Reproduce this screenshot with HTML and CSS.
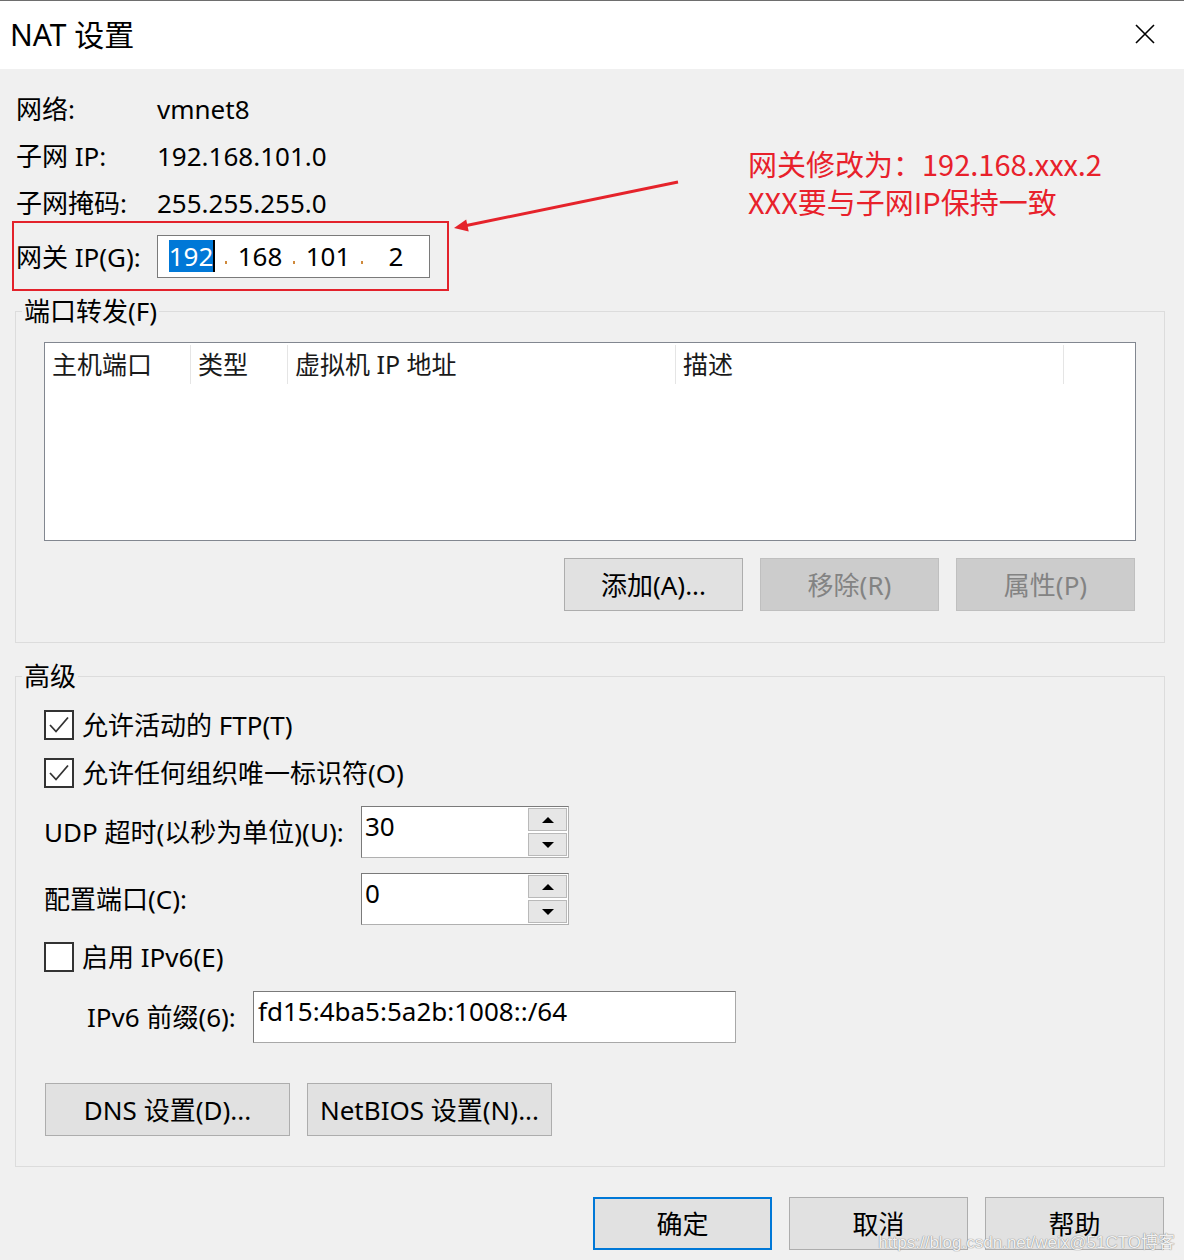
FILE: index.html
```html
<!DOCTYPE html>
<html lang="zh-CN">
<head>
<meta charset="utf-8">
<title>NAT 设置</title>
<link rel="stylesheet" href="styles.css">
</head>
<body>
<div class="dialog">
  <header class="titlebar">
    <span class="title">NAT 设置</span>
    <svg class="close" width="20" height="20" viewBox="0 0 20 20"><path d="M1 1 L19 19 M19 1 L1 19" stroke="#000" stroke-width="1.6" fill="none"/></svg>
  </header>

  <div class="content">
    <div class="info">
      <div class="row"><span class="lbl">网络:</span><span>vmnet8</span></div>
      <div class="row"><span class="lbl">子网 IP:</span><span>192.168.101.0</span></div>
      <div class="row"><span class="lbl">子网掩码:</span><span>255.255.255.0</span></div>
    </div>

    <div class="gateway">
      <span class="lbl">网关 IP(G):</span>
      <div class="ipfield">
        <span class="seg"><span class="sel">192</span><span class="caret"></span></span>
        <span class="dot"></span>
        <span class="seg">168</span>
        <span class="dot"></span>
        <span class="seg">101</span>
        <span class="dot"></span>
        <span class="seg">2</span>
      </div>
    </div>

    <fieldset class="group group-ports">
      <legend>端口转发(F)</legend>
      <div class="group-inner">
        <div class="list">
          <div class="list-head">
            <div class="col">主机端口</div>
            <div class="col">类型</div>
            <div class="col">虚拟机 IP 地址</div>
            <div class="col">描述</div>
            <div class="col last"></div>
          </div>
        </div>
        <div class="btnrow">
          <button class="btn">添加(A)...</button>
          <button class="btn disabled">移除(R)</button>
          <button class="btn disabled">属性(P)</button>
        </div>
      </div>
    </fieldset>

    <fieldset class="group group-adv">
      <legend>高级</legend>
      <div class="adv-inner">
        <div class="chk-row first">
          <span class="checkbox"><svg width="26" height="26" viewBox="0 0 26 26"><path d="M4 13 L10 19.5 L22 5.5" stroke="#333" stroke-width="1.8" fill="none"/></svg></span>
          <span>允许活动的 FTP(T)</span>
        </div>
        <div class="chk-row second">
          <span class="checkbox"><svg width="26" height="26" viewBox="0 0 26 26"><path d="M4 13 L10 19.5 L22 5.5" stroke="#333" stroke-width="1.8" fill="none"/></svg></span>
          <span>允许任何组织唯一标识符(O)</span>
        </div>
        <div class="field-row udp">
          <span class="flbl">UDP 超时(以秒为单位)(U):</span>
          <div class="spin">
            <span class="spin-val">30</span>
            <span class="spin-btns">
              <span class="sbtn"><span class="tri up"></span></span>
              <span class="sbtn"><span class="tri down"></span></span>
            </span>
          </div>
        </div>
        <div class="field-row port">
          <span class="flbl">配置端口(C):</span>
          <div class="spin">
            <span class="spin-val">0</span>
            <span class="spin-btns">
              <span class="sbtn"><span class="tri up"></span></span>
              <span class="sbtn"><span class="tri down"></span></span>
            </span>
          </div>
        </div>
        <div class="chk-row ipv6">
          <span class="checkbox"></span>
          <span>启用 IPv6(E)</span>
        </div>
        <div class="prefix-row">
          <span class="plbl">IPv6 前缀(6):</span>
          <div class="textbox">fd15:4ba5:5a2b:1008::/64</div>
        </div>
        <div class="adv-btns">
          <button class="btn wide">DNS 设置(D)...</button>
          <button class="btn wide">NetBIOS 设置(N)...</button>
        </div>
      </div>
    </fieldset>

    <div class="footer">
      <button class="btn default">确定</button>
      <button class="btn">取消</button>
      <button class="btn">帮助</button>
    </div>
  </div>

  <div class="note">网关修改为：192.168.xxx.2<br>XXX要与子网IP保持一致</div>
  <svg class="arrow" width="250" height="70" viewBox="0 0 250 70">
    <line x1="238" y1="12" x2="24" y2="56" stroke="#e5232b" stroke-width="3"/>
    <polygon points="14,58 28.7,61.5 26.2,49.5" fill="#e5232b"/>
  </svg>
  <div class="watermark">https://blog.csdn.net/weix@51CTO博客</div>
</div>
</body>
</html>
```

FILE: styles.css
```css
* { box-sizing: border-box; }
html, body { margin: 0; padding: 0; }
body {
  width: 1184px;
  height: 1260px;
  overflow: hidden;
  background: #f0f0f0;
  font-family: "Noto Sans", "Noto Sans CJK SC", sans-serif;
  font-size: 26px;
  color: #000;
}
.dialog {
  position: relative;
  width: 1184px;
  height: 1260px;
  background: #f0f0f0;
  border-top: 1px solid #6e6e6e;
}
.titlebar {
  height: 68px;
  background: #fff;
  display: flex;
  align-items: center;
  justify-content: space-between;
  padding: 0 29px 0 10px;
}
.title { font-size: 30px; line-height: 36px; }
.close { margin-bottom: 3px; }

.content { padding: 16px 19px 0 15px; }

.info .row {
  display: flex;
  align-items: center;
  height: 47px;
  line-height: 30px;
  padding-left: 1px;
}
.lbl { width: 141px; flex: none; }

.gateway {
  margin: -5px 0 0 -3px;
  width: 437px;
  height: 70px;
  border: 2px solid #e3222b;
  display: flex;
  align-items: center;
  padding-left: 2px;
}
.ipfield {
  width: 273px;
  height: 43px;
  border: 1px solid #7a7a7a;
  background: #fff;
  display: flex;
  align-items: center;
  padding-left: 4px;
}
.seg {
  width: 60px;
  display: flex;
  justify-content: center;
  align-items: center;
  line-height: 32px;
}
.sel { background: #0078d7; color: #fff; height: 32px; }
.caret { width: 2px; height: 32px; background: #000; }
.dot {
  width: 8px;
  height: 30px;
  display: flex;
  justify-content: center;
  align-items: flex-end;
}
.dot::after {
  content: "";
  width: 2px;
  height: 3px;
  margin-bottom: 7px;
  background: #cf8a3c;
}

.group {
  margin: 5px 0 0 0;
  padding: 0;
  border: 1px solid #dcdcdc;
  min-width: 0;
}
.group legend {
  margin-left: 6px;
  padding: 0 2px;
  font-size: 26px;
  line-height: 30px;
}
.group-adv { margin-top: 18px; }

.group-inner { padding: 16px 28px 31px 28px; }
.list {
  height: 199px;
  border: 1px solid #828790;
  background: #fff;
}
.list-head {
  display: grid;
  grid-template-columns: 146px 97px 388px 388px 1fr;
  height: 42px;
  padding-top: 2px;
}
.col {
  height: 39px;
  line-height: 39px;
  padding-left: 7px;
  border-right: 1px solid #e5e5e5;
  font-size: 25px;
  color: #1a1a1a;
  white-space: nowrap;
}
.col.last { border-right: none; }

.btn {
  width: 179px;
  height: 53px;
  background: #e1e1e1;
  border: 1px solid #adadad;
  font: inherit;
  font-size: 26px;
  color: #000;
  padding: 0;
  margin: 0;
  line-height: 30px;
}
.btn.disabled {
  background: #cccccc;
  border-color: #bfbfbf;
  color: #838383;
}
.btn.default { border: 2px solid #0078d7; }
.btn.wide { width: 245px; }

.btnrow {
  display: flex;
  justify-content: flex-end;
  gap: 17px;
  margin-top: 17px;
  padding-right: 1px;
}

.adv-inner {
  padding: 0 28px 30px 28px;
  display: flex;
  flex-direction: column;
}
.chk-row {
  display: flex;
  align-items: center;
  gap: 8px;
  height: 30px;
  line-height: 30px;
}
.chk-row.first { margin-top: 19px; }
.chk-row.second { margin-top: 18px; }
.chk-row.ipv6 { margin-top: 17px; }
.checkbox {
  width: 30px;
  height: 30px;
  border: 2px solid #333;
  background: #fff;
  flex: none;
  display: block;
}
.checkbox svg { display: block; }

.field-row {
  display: flex;
  align-items: center;
  height: 52px;
}
.field-row.udp { margin-top: 18px; }
.field-row.port { margin-top: 15px; }
.flbl { width: 317px; flex: none; line-height: 30px; }

.spin {
  width: 208px;
  height: 52px;
  border: 1px solid;
  border-color: #7a7a7a #b0b0b0 #b0b0b0 #7a7a7a;
  background: #fff;
  display: flex;
}
.spin-val {
  flex: 1;
  padding: 4px 0 0 3px;
  line-height: 30px;
}
.spin-btns {
  width: 40px;
  display: flex;
  flex-direction: column;
  gap: 2px;
  padding: 1px 1px 1px 0;
}
.sbtn {
  flex: 1;
  background: #e6e6e6;
  border: 1px solid #b9b9b9;
  display: flex;
  align-items: center;
  justify-content: center;
}
.tri { width: 0; height: 0; border-left: 6px solid transparent; border-right: 6px solid transparent; }
.tri.up { border-bottom: 6px solid #000; }
.tri.down { border-top: 6px solid #000; }

.prefix-row {
  display: flex;
  align-items: center;
  height: 52px;
  margin-top: 19px;
  padding-left: 43px;
}
.plbl { width: 166px; flex: none; line-height: 30px; }
.textbox {
  width: 483px;
  height: 52px;
  border: 1px solid;
  border-color: #7a7a7a #a8a8a8 #a8a8a8 #7a7a7a;
  background: #fff;
  padding: 4px 0 0 4px;
  line-height: 30px;
}

.adv-btns {
  display: flex;
  gap: 17px;
  margin-top: 40px;
  padding-left: 1px;
}

.footer {
  display: flex;
  justify-content: flex-end;
  gap: 17px;
  margin-top: 30px;
  padding-right: 1px;
}

.note {
  position: absolute;
  left: 748px;
  top: 143px;
  font-family: "Noto Sans CJK SC", sans-serif;
  font-size: 29px;
  line-height: 38px;
  color: #e8212b;
  white-space: nowrap;
}
.arrow {
  position: absolute;
  left: 440px;
  top: 169px;
}
.watermark {
  position: absolute;
  right: 9px;
  bottom: 7px;
  font-family: "Liberation Sans", "Noto Sans CJK SC", sans-serif;
  font-size: 17px;
  line-height: 20px;
  color: rgba(255, 255, 255, 0.9);
  text-shadow: 0 0 1px #8a8a8a, 0 0 1px #8a8a8a;
  white-space: nowrap;
}
```
